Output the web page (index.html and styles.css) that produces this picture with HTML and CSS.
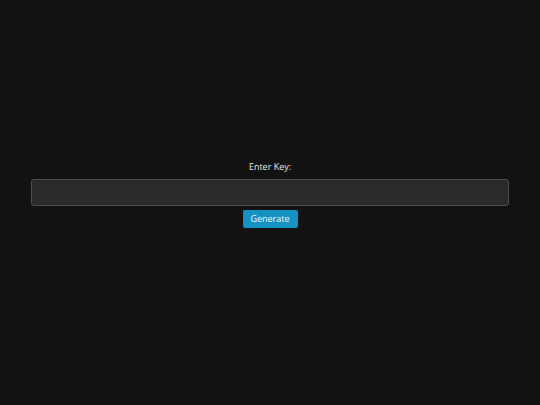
FILE: index.html
```html
<!DOCTYPE html>
<html>
<head>
<meta charset="utf-8">
<link rel="stylesheet" href="styles.css">
</head>
<body>
<main class="page">
  <form class="key-form">
    <label class="key-label" for="key">Enter Key:</label>
    <input class="key-input" id="key" type="text">
    <button class="generate-btn" type="button">Generate</button>
  </form>
</main>
</body>
</html>
```
FILE: styles.css
```css
html, body {
  margin: 0;
  padding: 0;
  background: #121212;
}
body {
  font-family: "Open Sans", "Liberation Sans", sans-serif;
  color: #dddddd;
}
.page {
  height: 405px;
  box-sizing: border-box;
  display: flex;
  flex-direction: column;
  justify-content: center;
  padding: 0 31px 18px;
}
.key-form {
  display: flex;
  flex-direction: column;
  align-items: center;
  margin: 0;
}
.key-label {
  font-size: 9px;
  line-height: 14px;
  margin-bottom: 5px;
  color: #e6e6e6;
}
.key-input {
  width: 100%;
  box-sizing: border-box;
  height: 27px;
  background: #2a2a2a;
  border: 1px solid #4e4e4e;
  border-radius: 3px;
  margin: 0 0 4px;
  outline: none;
  color: #ddd;
}
.generate-btn {
  width: 55px;
  height: 18px;
  padding: 0;
  border: none;
  border-radius: 2px;
  background: #1592c4;
  color: #eef7fb;
  font-family: "Open Sans", "Liberation Sans", sans-serif;
  font-size: 9px;
  line-height: 18px;
}
```
